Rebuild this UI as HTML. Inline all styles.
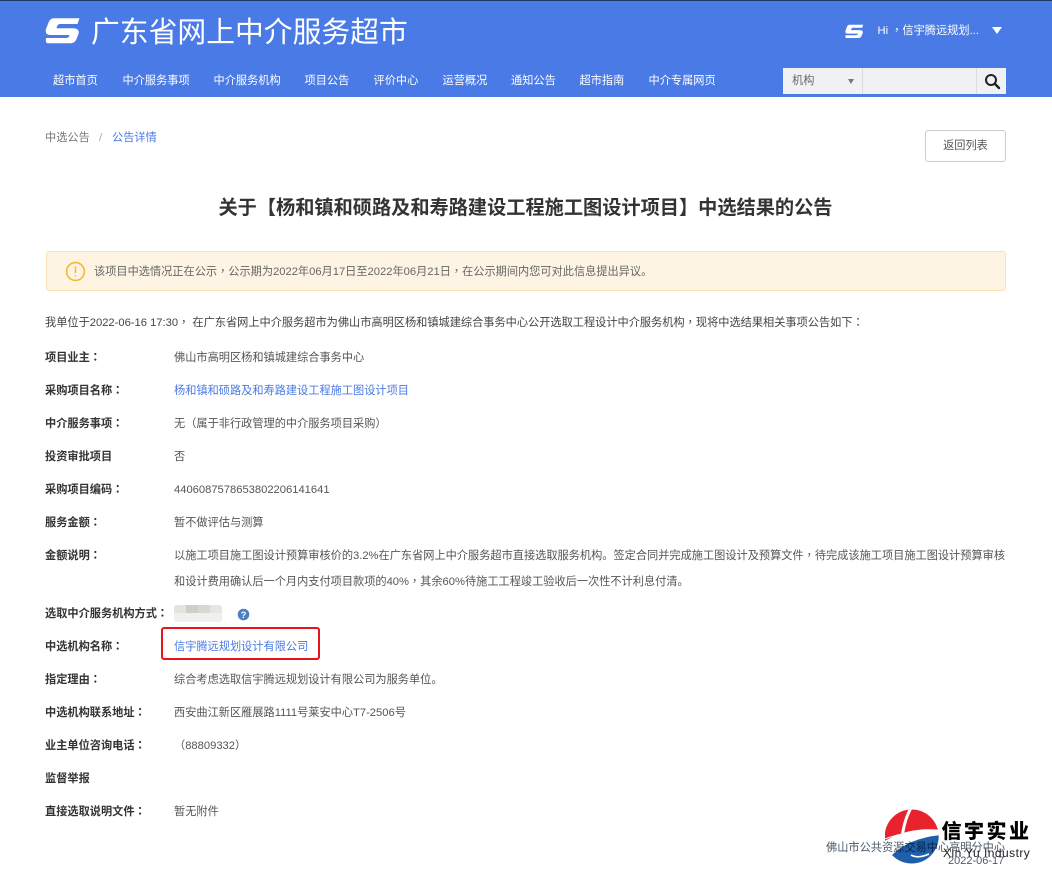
<!DOCTYPE html>
<html>
<head>
<meta charset="utf-8">
<title>广东省网上中介服务超市</title>
<style>
html,body{margin:0;padding:0;background:#fff;}
body{width:1052px;height:879px;position:relative;overflow:hidden;font-family:"Liberation Sans","Noto Sans CJK SC",sans-serif;font-size:11.2px;color:#555;}
.a{position:absolute;white-space:nowrap;line-height:16px;}
.hd{position:absolute;left:0;top:0;width:1052px;height:97px;background:#4a7ae6;border-top:1px solid #1d3a66;box-sizing:border-box;}
.nav{position:absolute;top:72.5px;color:#fff;line-height:16px;white-space:nowrap;font-size:11.2px;}
.l{position:absolute;left:45px;color:#333;font-weight:bold;white-space:nowrap;line-height:16px;font-size:11.2px;}
.v{position:absolute;left:174px;color:#555;white-space:nowrap;line-height:16px;font-size:11.2px;}
.b{color:#4a7ae6;}
i{font-style:normal;font-family:"Noto Sans CJK TC",sans-serif;line-height:0;}
</style>
</head>
<body>
<div class="hd"></div>
<svg class="a" style="left:45px;top:17px" width="36" height="28" viewBox="0 0 36 28">
<path fill="#fff" d="M9 1.3H34.500L32.500 7H15C13 7 12 9 11.500 11.300H28C33 11.300 34.500 14 33.500 17L31.500 22C30.500 25 28 26.300 25 26.300H3C1 26.300 .5 24 1 21H21C23 21 24 20 24.500 18H6C1.500 18 0 16 1 12L3 7C4.500 3 6 1.300 9 1.300Z"/>
</svg>
<div class="a" style="left:91px;top:13.5px;font-size:28.8px;line-height:38px;color:#fff;">广东省网上中介服务超市</div>
<div class="nav" style="left:53px">超市首页</div>
<div class="nav" style="left:122.5px">中介服务事项</div>
<div class="nav" style="left:213.5px">中介服务机构</div>
<div class="nav" style="left:304.5px">项目公告</div>
<div class="nav" style="left:373.5px">评价中心</div>
<div class="nav" style="left:442.5px">运营概况</div>
<div class="nav" style="left:511px">通知公告</div>
<div class="nav" style="left:579.5px">超市指南</div>
<div class="nav" style="left:648.5px">中介专属网页</div>
<svg class="a" style="left:845px;top:23.5px" width="19" height="15" viewBox="0 0 36 28">
<path fill="#fff" d="M9 1.3H34.500L32.500 7H15C13 7 12 9 11.500 11.300H28C33 11.300 34.500 14 33.500 17L31.500 22C30.500 25 28 26.300 25 26.300H3C1 26.300 .5 24 1 21H21C23 21 24 20 24.500 18H6C1.500 18 0 16 1 12L3 7C4.500 3 6 1.300 9 1.300Z"/>
</svg>
<div class="a" style="left:877.5px;top:22.5px;color:#fff;">Hi <i>，</i>信宇腾远规划...</div>
<div class="a" style="left:992px;top:27px;width:0;height:0;border-left:5px solid transparent;border-right:5px solid transparent;border-top:7px solid #fff;"></div>
<div class="a" style="left:783px;top:68px;width:223px;height:26px;background:#f0f1f3;"></div>
<div class="a" style="left:861.5px;top:68px;width:1px;height:26px;background:#dcdcdc;"></div>
<div class="a" style="left:975.5px;top:68px;width:1px;height:26px;background:#dcdcdc;"></div>
<div class="a" style="left:792px;top:72.5px;color:#666;">机构</div>
<div class="a" style="left:848px;top:79px;width:0;height:0;border-left:3.5px solid transparent;border-right:3.5px solid transparent;border-top:5px solid #777;"></div>
<svg class="a" style="left:983px;top:72px" width="18" height="18" viewBox="0 0 18 18">
<circle cx="8" cy="8" r="5" fill="none" stroke="#222" stroke-width="2"/>
<path d="M12 12L16 16" stroke="#222" stroke-width="2.4" stroke-linecap="round"/>
</svg>

<div class="a" style="left:45px;top:130px;color:#777;">中选公告</div>
<div class="a" style="left:99px;top:130px;color:#aaa;">/</div>
<div class="a b" style="left:112px;top:130px;">公告详情</div>
<div class="a" style="left:925px;top:130px;width:81px;height:32px;box-sizing:border-box;border:1px solid #ccc;border-radius:3px;text-align:center;line-height:29px;color:#555;padding-top:1px;">返回列表</div>

<div class="a" style="left:-0.5px;top:195px;width:1052px;text-align:center;font-size:19.2px;line-height:27px;font-weight:bold;color:#333;">关于【杨和镇和硕路及和寿路建设工程施工图设计项目】中选结果的公告</div>

<div class="a" style="left:46px;top:251px;width:960px;height:40px;box-sizing:border-box;background:#fef4e3;border:1px solid #fbe2b0;border-radius:3px;"></div>
<svg class="a" style="left:65px;top:261px" width="21" height="21" viewBox="0 0 21 21">
<circle cx="10.5" cy="10.5" r="8.9" fill="none" stroke="#f9b72f" stroke-width="1.6"/>
<path d="M10.5 5.5V12" stroke="#f9b72f" stroke-width="1.5"/>
<path d="M10.5 14V15.5" stroke="#f9b72f" stroke-width="1.5"/>
</svg>
<div class="a" style="left:94px;top:264px;color:#666;">该项目中选情况正在公示<i>，</i>公示期为2022年06月17日至2022年06月21日<i>，</i>在公示期间内您可对此信息提出异议。</div>

<div class="a" style="left:45px;top:315px;color:#444;">我单位于2022-06-16 17:30<i>，</i> 在广东省网上中介服务超市为佛山市高明区杨和镇城建综合事务中心公开选取工程设计中介服务机构<i>，</i>现将中选结果相关事项公告如下<i>：</i></div>

<div class="l" style="top:350px">项目业主<i>：</i></div>
<div class="v" style="top:350px">佛山市高明区杨和镇城建综合事务中心</div>
<div class="l" style="top:383px">采购项目名称<i>：</i></div>
<div class="v b" style="top:383px">杨和镇和硕路及和寿路建设工程施工图设计项目</div>
<div class="l" style="top:416px">中介服务事项<i>：</i></div>
<div class="v" style="top:416px">无<i>（</i>属于非行政管理的中介服务项目采购<i>）</i></div>
<div class="l" style="top:449px">投资审批项目</div>
<div class="v" style="top:449px">否</div>
<div class="l" style="top:482px">采购项目编码<i>：</i></div>
<div class="v" style="top:482px">4406087578653802206141641</div>
<div class="l" style="top:515px">服务金额<i>：</i></div>
<div class="v" style="top:515px">暂不做评估与测算</div>
<div class="l" style="top:548px">金额说明<i>：</i></div>
<div class="v" style="top:548px">以施工项目施工图设计预算审核价的3.2%在广东省网上中介服务超市直接选取服务机构。签定合同并完成施工图设计及预算文件<i>，</i>待完成该施工项目施工图设计预算审核</div>
<div class="v" style="top:574px">和设计费用确认后一个月内支付项目款项的40%<i>，</i>其余60%待施工工程竣工验收后一次性不计利息付清。</div>
<div class="l" style="top:606px">选取中介服务机构方式<i>：</i></div>
<div class="a" style="left:174px;top:605px;width:48px;height:17px;border-radius:3px;overflow:hidden;background:#f0f0ee;">
<div style="position:absolute;left:0;top:0;width:12px;height:8px;background:#e4e3e0;"></div>
<div style="position:absolute;left:12px;top:0;width:12px;height:8px;background:#cfcec9;"></div>
<div style="position:absolute;left:24px;top:0;width:12px;height:8px;background:#d8d7d3;"></div>
<div style="position:absolute;left:36px;top:0;width:12px;height:8px;background:#e6e6e4;"></div>
</div>
<svg class="a" style="left:237px;top:608px" width="13" height="13" viewBox="0 0 13 13">
<circle cx="6.5" cy="6.5" r="5.8" fill="#4a7fc0"/>
<text x="6.5" y="10" font-size="9.5" font-weight="bold" text-anchor="middle" fill="#fff" font-family="Liberation Sans">?</text>
</svg>
<div class="l" style="top:639px">中选机构名称<i>：</i></div>
<div class="a" style="left:161px;top:627px;width:159px;height:33px;box-sizing:border-box;border:2.4px solid #e8141c;border-radius:3px;"></div>
<div class="v b" style="top:639px">信宇腾远规划设计有限公司</div>
<div class="l" style="top:672px">指定理由<i>：</i></div>
<div class="v" style="top:672px">综合考虑选取信宇腾远规划设计有限公司为服务单位。</div>
<div class="l" style="top:705px">中选机构联系地址<i>：</i></div>
<div class="v" style="top:705px">西安曲江新区雁展路1111号莱安中心T7-2506号</div>
<div class="l" style="top:738px">业主单位咨询电话<i>：</i></div>
<div class="v" style="top:738px"><i>（</i>88809332<i>）</i></div>
<div class="l" style="top:771px">监督举报</div>
<div class="l" style="top:804px">直接选取说明文件<i>：</i></div>
<div class="v" style="top:804px">暂无附件</div>

<div class="a" style="left:826px;top:840px;color:#4c5a6a;">佛山市公共资源交易中心高明分中心</div>
<div class="a" style="left:948px;top:853px;color:#4c5a6a;font-size:11px;">2022-06-17</div>
<svg class="a" style="left:885px;top:808px;mix-blend-mode:multiply" width="54" height="58" viewBox="0 0 54 58">
<defs><clipPath id="c"><circle cx="26.7" cy="28.5" r="27"/></clipPath></defs>
<g clip-path="url(#c)">
<path fill="#e9232d" d="M-2 34Q24 18 56 22V-2H-2Z"/>
<path fill="#1f5ea8" d="M7 47Q24 30 56 27V60H7Z"/>
<path fill="none" stroke="#fff" stroke-width="3" d="M26 0Q18 14 16.500 36"/>
<path fill="none" stroke="#fff" stroke-width=".9" d="M0 31Q25 21 56 24"/>
<path fill="none" stroke="#fff" stroke-width="1.6" d="M26 47Q33 51 44 46"/>
</g>
</svg>
<div class="a" style="left:941.5px;top:820px;font-size:20px;line-height:24px;font-weight:900;color:#000;letter-spacing:2.5px;">信宇实业</div>
<div class="a" style="left:943px;top:846px;font-size:12px;line-height:15px;color:#222;letter-spacing:.45px;">Xin Yu Industry</div>
</body>
</html>
